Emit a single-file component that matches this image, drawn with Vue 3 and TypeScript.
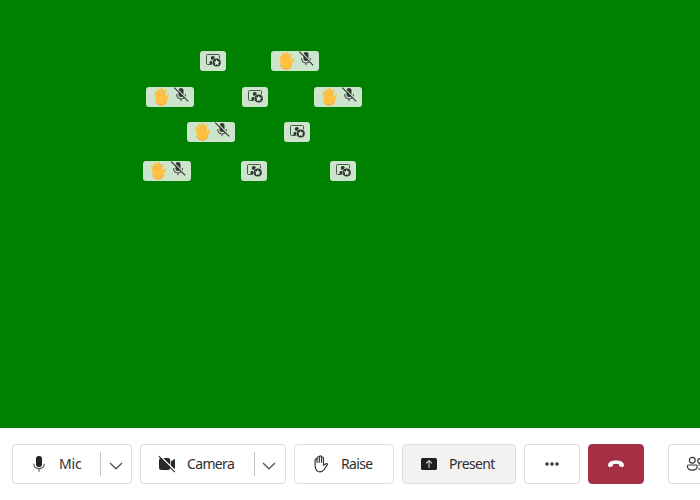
<script setup lang="ts">
interface Badge {
  x: number
  y: number
  kind: 'raised' | 'spotlight'
}

const badges: Badge[] = [
  { x: 200, y: 51, kind: 'spotlight' },
  { x: 271, y: 51, kind: 'raised' },
  { x: 146, y: 87, kind: 'raised' },
  { x: 242, y: 87, kind: 'spotlight' },
  { x: 314, y: 87, kind: 'raised' },
  { x: 187, y: 122, kind: 'raised' },
  { x: 284, y: 122, kind: 'spotlight' },
  { x: 143, y: 161, kind: 'raised' },
  { x: 241, y: 161, kind: 'spotlight' },
  { x: 330, y: 161, kind: 'spotlight' },
]
</script>

<template>
  <div class="meeting">
    <main class="stage">
      <div
        v-for="(b, i) in badges"
        :key="i"
        class="badge"
        :class="b.kind"
        :style="{ left: b.x + 'px', top: b.y + 'px' }"
      >
        <template v-if="b.kind === 'raised'">
          <svg class="hand" width="17" height="19" viewBox="0 0 17 19">
            <g fill="none" stroke="#ffc240" stroke-linecap="round">
              <path d="M4 10.5 2.5 6" stroke-width="2.4" />
              <path d="M6.3 9.2 5.1 3.1" stroke-width="2.6" />
              <path d="M8.9 9 8.7 2" stroke-width="2.6" />
              <path d="M11.4 9.5 12.2 3.8" stroke-width="2.4" />
            </g>
            <path
              d="M2.3 8.3 C4.4 7 9.6 7.1 12.4 8 L12.4 10.2 C13.5 8.8 14.6 7.2 15.8 7.8 C16.6 8.4 15.6 10 14.9 11.4 C13.8 13.8 13.3 18.3 8.8 18.5 C4.9 18.6 3 16.2 2.6 12.8 Z"
              fill="#ffc240"
            />
            <path d="M2.8 14 C3.5 17.1 6 18.4 9.1 18.1 C11.8 17.8 13 16 13.7 14" fill="none" stroke="#f69d3e" stroke-width=".9" />
            <path d="M3.9 5.2 5 8.4M6.9 3 7.3 8M10.3 3.2 10.2 8" fill="none" stroke="#f29a38" stroke-width=".6" />
          </svg>
          <svg class="muted" width="16" height="16" viewBox="0 0 16 16">
            <rect x="5.5" y="1" width="5" height="9" rx="2.5" fill="#343834" />
            <path d="M3.6 7.1C3.6 10.5 5.3 12 8 12S12.4 10.5 12.4 7.1M8 12V14.3" fill="none" stroke="#4a504a" stroke-width="1.1" />
            <path d="M2.3 .2 15.6 13.6" stroke="#cce5cc" stroke-width="1.2" />
            <path d="M1.2 .6 15.2 14.4" stroke="#343834" stroke-width="1.15" />
          </svg>
        </template>
        <svg v-else class="spot" width="16" height="14" viewBox="0 0 16 14">
          <path d="M5.5 10.5H1.5Q.5 10.5 .5 9.5V1.5Q.5 .5 1.5 .5H12.5Q13.5 .5 13.5 1.5V4.5" fill="none" stroke="#4c584c" stroke-width="1" />
          <circle cx="6.8" cy="4" r="2" fill="#303430" />
          <path d="M3.6 10.3V8.2Q3.6 7 4.9 7H8.6V10.3Z" fill="#303430" />
          <circle cx="10.7" cy="8.5" r="4.7" fill="#cce5cc" />
          <circle cx="10.7" cy="8.5" r="4.1" fill="#303430" />
          <path d="m10.7 5.5.9 1.9 2.1.2-1.5 1.5.4 2.1-1.9-1-1.9 1 .4-2.1-1.5-1.5 2.1-.2z" fill="#e1f0e1" />
        </svg>
      </div>
    </main>

    <footer class="toolbar">
      <button class="btn mic">
        <svg class="icon" width="16" height="18" viewBox="0 0 16 18">
          <rect x="5" y="1" width="6" height="11" rx="2.8" fill="#242424" />
          <path d="M2.8 8.7C2.8 12.1 5 13.6 8 13.6S13.2 12.1 13.2 8.7M8 13.6V16.7" fill="none" stroke="#505050" stroke-width="1.1" />
        </svg>
        <span class="label">Mic</span>
        <span class="divider"></span>
        <svg class="chevron" width="14" height="8" viewBox="0 0 14 8"><path d="m1 1 6 5.8L13 1" /></svg>
      </button>
      <button class="btn camera">
        <svg class="icon" width="18" height="18" viewBox="0 0 18 18">
          <rect x="1" y="3" width="11.3" height="12" rx="2.3" fill="#292929" />
          <path d="m13 6.7 2.9-2.4Q17 3.4 17 4.9v8.2q0 1.3-1.1.5L13 11.4Z" fill="#292929" />
          <path d="m1.7.5 16 16" stroke="#fff" stroke-width="1.5" />
          <path d="m.8 1.2 16 16" stroke="#292929" stroke-width="1.1" />
        </svg>
        <span class="label">Camera</span>
        <span class="divider"></span>
        <svg class="chevron" width="14" height="8" viewBox="0 0 14 8"><path d="m1 1 6 5.8L13 1" /></svg>
      </button>
      <button class="btn raise">
        <svg class="icon" width="16" height="18" viewBox="0 0 16 18">
          <path d="M2.1 10.8V4.9q0-1.1 1-1.1t1 1.1V8M4.1 8V2.8q0-1.1 1.1-1.1t1.1 1.1v5M6.3 7.8V2q0-1.1 1.1-1.1T8.5 2v5.8M8.5 7.8V3.1q0-1.1 1-1.1t1 1.1v7.1l2.4-1.5q1-.5 1.8.4l-3.4 5.1q-1.7 2.6-4.5 2.6Q3.6 16.8 2.7 13.7L2.1 10.8" fill="none" stroke="#303030" stroke-width="1.15" stroke-linejoin="round" />
        </svg>
        <span class="label">Raise</span>
      </button>
      <button class="btn present">
        <svg class="icon" width="16" height="12" viewBox="0 0 16 12">
          <rect width="16" height="12" rx="1.6" fill="#201f1e" />
          <path d="M8 10V2.7M5.1 5.4 8 2.5l2.9 2.9" fill="none" stroke="#d0cfcf" stroke-width="1.1" />
        </svg>
        <span class="label">Present</span>
      </button>
      <button class="btn more" aria-label="More">
        <svg width="14" height="4" viewBox="0 0 14 4" fill="#3a3a3a">
          <circle cx="2" cy="2" r="1.8" /><circle cx="7" cy="2" r="1.8" /><circle cx="12" cy="2" r="1.8" />
        </svg>
      </button>
      <button class="btn hangup" aria-label="Hang up">
        <svg width="16" height="8" viewBox="0 0 16 8">
          <path d="M.2 4.4C.4 1.9 4 .5 8 .5s7.6 1.4 7.8 3.9v1.3q-.1 1.4-1.4 1.2l-2.3-.4q-.9-.2-1-1.1L11 4.2Q8 3.2 5 4.2l-.1 1.2q-.1.9-1 1.1l-2.3.4Q.3 7.1.2 5.7Z" fill="#fff" />
        </svg>
      </button>
      <button class="btn people" aria-label="People">
        <svg width="20" height="16" viewBox="0 0 20 16" fill="none" stroke="#353535" stroke-width="1.15">
          <circle cx="6.3" cy="4.2" r="2.9" />
          <path d="M2.4 9h7.8q1 0 1 1c0 2.5-2 4.1-4.9 4.1S1.4 12.5 1.4 10q0-1 1-1Z" />
          <circle cx="14.2" cy="5" r="2.4" />
          <path d="M12.4 9h4.8q1.2 0 1.2 1.2c0 2-1.8 3-4 3q-1.3 0-2.2-.4" />
        </svg>
      </button>
    </footer>
  </div>
</template>

<style>
body {
  margin: 0;
  overflow: hidden;
}
</style>

<style scoped>
.meeting {
  display: flex;
  flex-direction: column;
  width: 700px;
  height: 500px;
  overflow: hidden;
  background: #fff;
  font-family: "Noto Sans", "Open Sans", sans-serif;
}
.stage {
  position: relative;
  height: 428px;
  flex: none;
  background: #008000;
}
.badge {
  position: absolute;
  display: flex;
  align-items: flex-start;
  box-sizing: border-box;
  width: 48px;
  height: 20px;
  border-radius: 3px;
  background: #cce5cc;
}
.badge.raised {
  padding: 0 0 0 7px;
  gap: 3px;
}
.badge.spotlight {
  width: 26px;
  padding: 3px 0 0 6px;
}
svg {
  display: block;
  flex: none;
}
.toolbar {
  display: flex;
  gap: 8px;
  padding: 16px 0 0 12px;
}
.btn {
  display: flex;
  flex: none;
  align-items: center;
  box-sizing: border-box;
  height: 40px;
  margin: 0;
  padding: 0;
  border: 1px solid #dedede;
  border-radius: 4px;
  background: #fff;
  color: #303030;
  font: 400 14px/20px "Noto Sans", "Open Sans", sans-serif;
}
.label {
  flex: none;
  text-align: left;
  letter-spacing: -0.65px;
}
.mic .label {
  letter-spacing: -0.2px;
}
.divider {
  width: 1px;
  height: 24px;
  margin-left: auto;
  flex: none;
  background: #c4c4c4;
}
.chevron {
  margin: 4px 8px 0 8px;
}
.camera .chevron {
  margin: 4px 9px 0 7px;
}
.chevron path {
  fill: none;
  stroke: #555;
  stroke-width: 1.25;
}
.mic {
  width: 120px;
  padding-left: 18px;
}
.mic .label {
  margin-left: 12px;
}
.camera {
  width: 146px;
  padding-left: 17px;
}
.camera .label {
  margin-left: 11px;
}
.raise {
  width: 100px;
  padding-left: 18px;
}
.raise .label {
  margin-left: 12px;
}
.present {
  width: 114px;
  padding-left: 18px;
  background: #f3f2f1;
}
.present .label {
  margin-left: 12px;
}
.more,
.hangup {
  width: 56px;
  justify-content: center;
}
.hangup {
  border-color: #a52f44;
  background: #a52f44;
}
.people {
  width: 56px;
  margin-left: 16px;
  padding-left: 17px;
}
</style>
